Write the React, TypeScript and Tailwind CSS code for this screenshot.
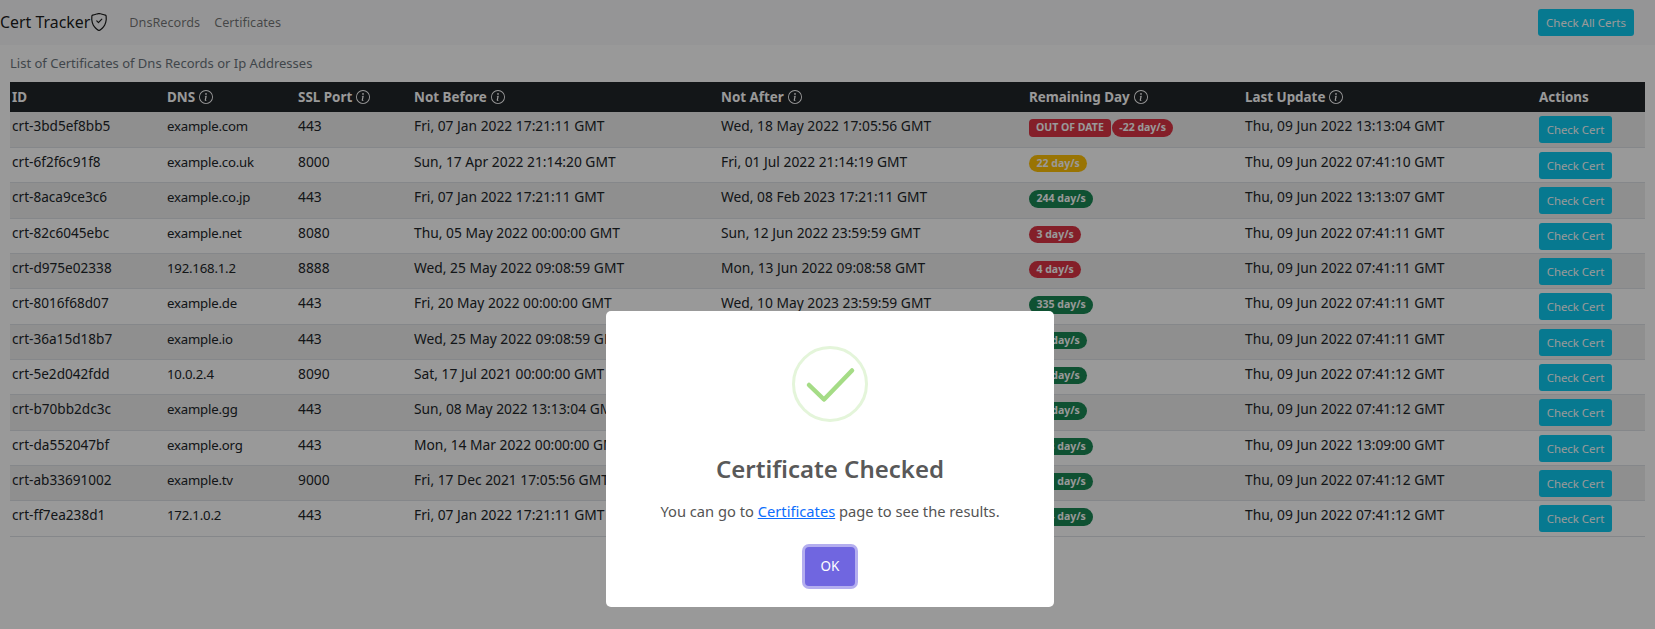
import React from "react";
import { BsInfoCircle, BsShieldCheck } from "react-icons/bs";

type Tone = "red" | "yellow" | "green";
type Row = { id: string; dns: string; port: string; before: string; after: string; tone: Tone; days: string; out?: boolean; update: string };

const rows: Row[] = [
  { id: "crt-3bd5ef8bb5", dns: "example.com", port: "443", before: "Fri, 07 Jan 2022 17:21:11 GMT", after: "Wed, 18 May 2022 17:05:56 GMT", tone: "red", days: "-22 day/s", out: true, update: "Thu, 09 Jun 2022 13:13:04 GMT" },
  { id: "crt-6f2f6c91f8", dns: "example.co.uk", port: "8000", before: "Sun, 17 Apr 2022 21:14:20 GMT", after: "Fri, 01 Jul 2022 21:14:19 GMT", tone: "yellow", days: "22 day/s", update: "Thu, 09 Jun 2022 07:41:10 GMT" },
  { id: "crt-8aca9ce3c6", dns: "example.co.jp", port: "443", before: "Fri, 07 Jan 2022 17:21:11 GMT", after: "Wed, 08 Feb 2023 17:21:11 GMT", tone: "green", days: "244 day/s", update: "Thu, 09 Jun 2022 13:13:07 GMT" },
  { id: "crt-82c6045ebc", dns: "example.net", port: "8080", before: "Thu, 05 May 2022 00:00:00 GMT", after: "Sun, 12 Jun 2022 23:59:59 GMT", tone: "red", days: "3 day/s", update: "Thu, 09 Jun 2022 07:41:11 GMT" },
  { id: "crt-d975e02338", dns: "192.168.1.2", port: "8888", before: "Wed, 25 May 2022 09:08:59 GMT", after: "Mon, 13 Jun 2022 09:08:58 GMT", tone: "red", days: "4 day/s", update: "Thu, 09 Jun 2022 07:41:11 GMT" },
  { id: "crt-8016f68d07", dns: "example.de", port: "443", before: "Fri, 20 May 2022 00:00:00 GMT", after: "Wed, 10 May 2023 23:59:59 GMT", tone: "green", days: "335 day/s", update: "Thu, 09 Jun 2022 07:41:11 GMT" },
  { id: "crt-36a15d18b7", dns: "example.io", port: "443", before: "Wed, 25 May 2022 09:08:59 GMT", after: "Sat, 20 Aug 2022 09:08:58 GMT", tone: "green", days: "72 day/s", update: "Thu, 09 Jun 2022 07:41:11 GMT" },
  { id: "crt-5e2d042fdd", dns: "10.0.2.4", port: "8090", before: "Sat, 17 Jul 2021 00:00:00 GMT", after: "Thu, 18 Aug 2022 23:59:59 GMT", tone: "green", days: "70 day/s", update: "Thu, 09 Jun 2022 07:41:12 GMT" },
  { id: "crt-b70bb2dc3c", dns: "example.gg", port: "443", before: "Sun, 08 May 2022 13:13:04 GMT", after: "Sat, 06 Aug 2022 13:13:03 GMT", tone: "green", days: "58 day/s", update: "Thu, 09 Jun 2022 07:41:12 GMT" },
  { id: "crt-da552047bf", dns: "example.org", port: "443", before: "Mon, 14 Mar 2022 00:00:00 GMT", after: "Tue, 14 Mar 2023 23:59:59 GMT", tone: "green", days: "278 day/s", update: "Thu, 09 Jun 2022 13:09:00 GMT" },
  { id: "crt-ab33691002", dns: "example.tv", port: "9000", before: "Fri, 17 Dec 2021 17:05:56 GMT", after: "Sat, 17 Dec 2022 17:05:56 GMT", tone: "green", days: "191 day/s", update: "Thu, 09 Jun 2022 07:41:12 GMT" },
  { id: "crt-ff7ea238d1", dns: "172.1.0.2", port: "443", before: "Fri, 07 Jan 2022 17:21:11 GMT", after: "Wed, 08 Feb 2023 17:21:11 GMT", tone: "green", days: "244 day/s", update: "Thu, 09 Jun 2022 07:41:12 GMT" },
];

const toneClass: Record<Tone, string> = {
  red: "bg-[#dc3545]",
  yellow: "bg-[#ffc107]",
  green: "bg-[#198754]",
};

function Head({ label, info = true, className }: { label: string; info?: boolean; className: string }) {
  return (
    <th className={`${className} p-0.5 text-left text-[13.4px] font-bold text-white`}>
      <span className="inline-flex items-center gap-1">
        {label}
        {info && <BsInfoCircle className="h-[14px] w-[14px]" />}
      </span>
    </th>
  );
}

function Badge({ tone, children, square }: { tone: Tone; children: React.ReactNode; square?: boolean }) {
  return (
    <span className={`${toneClass[tone]} ${square ? "rounded-[4px] px-[7px]" : "rounded-full px-[7.5px]"} inline-block h-[17.5px] text-[10.5px] leading-[17.5px] font-bold text-white`}>
      {children}
    </span>
  );
}

const cell = "px-0.5 pt-1 align-top leading-[20px]";

export default function App() {
  return (
    <div className="relative h-[629px] overflow-hidden bg-white text-[13.8px] text-[#212529] [font-family:'Noto_Sans',sans-serif]">
      <nav className="flex h-[45px] items-center bg-[#f8f9fa] pr-[21px]">
        <span className="flex items-center text-[15.9px] text-black/90">
          Cert Tracker
          <BsShieldCheck className="h-[18px] w-[18px]" />
        </span>
        <a className="ml-[21px] text-[12.7px] text-black/55">DnsRecords</a>
        <a className="ml-[14px] text-[12.7px] text-black/55">Certificates</a>
        <button className="ml-auto h-[27px] w-[96px] rounded-[3px] bg-[#0dcaf0] text-[11.5px] text-white">Check All Certs</button>
      </nav>
      <main className="px-2.5">
        <p className="flex h-[37px] items-center text-[13px] text-[#6c757d]">List of Certificates of Dns Records or Ip Addresses</p>
        <table className="w-full table-fixed border-collapse">
          <thead>
            <tr className="h-[30px] bg-[#212529]">
              <Head label="ID" info={false} className="w-[155px]" />
              <Head label="DNS" className="w-[131px]" />
              <Head label="SSL Port" className="w-[116px]" />
              <Head label="Not Before" className="w-[307px]" />
              <Head label="Not After" className="w-[308px]" />
              <Head label="Remaining Day" className="w-[216px]" />
              <Head label="Last Update" className="w-[294px]" />
              <Head label="Actions" info={false} className="w-[108px]" />
            </tr>
          </thead>
          <tbody>
            {rows.map((r, i) => (
              <tr key={r.id} className={`h-[35.35px] border-b border-[#dee2e6] ${i % 2 === 0 ? "bg-[#efefef]" : ""}`}>
                <td className={`${cell} text-[13.6px]`}>{r.id}</td>
                <td className={`${cell} text-[13.2px] tracking-[-0.2px]`}>{r.dns}</td>
                <td className={cell}>{r.port}</td>
                <td className={cell}>{r.before}</td>
                <td className={cell}>{r.after}</td>
                <td className="px-0.5 pt-[7px] align-top">
                  <span className="flex items-center gap-px">
                    {r.out && <Badge tone="red" square>OUT OF DATE</Badge>}
                    <Badge tone={r.tone}>{r.days}</Badge>
                  </span>
                </td>
                <td className={cell}>{r.update}</td>
                <td className="px-0.5 pt-1 align-top">
                  <button className="block h-[27px] w-[73px] rounded-[3px] bg-[#0dcaf0] text-[11.4px] text-white">Check Cert</button>
                </td>
              </tr>
            ))}
          </tbody>
        </table>
      </main>
      <div className="absolute inset-0 flex justify-center bg-black/40 pt-[311px] pl-[5px]">
        <div className="flex h-[296px] w-[448px] flex-col items-center rounded-[5px] bg-white">
          <svg viewBox="0 0 76 76" className="mt-[35px] h-[76px] w-[76px]" fill="none">
            <circle cx="38" cy="38" r="36.5" stroke="#e4f5da" strokeWidth="3" />
            <path d="M17 39 L32 53.5 L60 24.5" stroke="#a5dc86" strokeWidth="4.5" strokeLinecap="round" strokeLinejoin="round" />
          </svg>
          <h2 className="mt-[27px] text-[24px] leading-[40px] font-semibold text-[#595959]">Certificate Checked</h2>
          <p className="mt-[10px] text-[14.7px] leading-[24px] text-[#545454]">
            You can go to <a className="text-[#0d6efd] underline">Certificates</a> page to see the results.
          </p>
          <button className="mt-[24px] h-[39px] w-[50px] rounded-[4px] bg-[#7066e0] text-[13.5px] text-white ring-3 ring-[#b4aeef]">OK</button>
        </div>
      </div>
    </div>
  );
}
